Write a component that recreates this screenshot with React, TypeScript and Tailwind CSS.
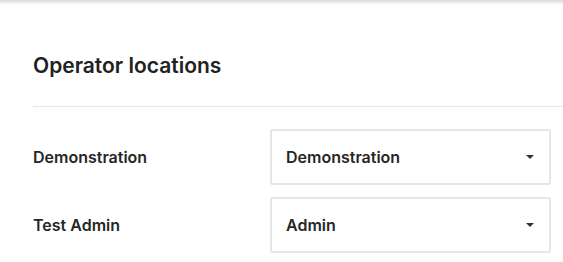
import React from "react";

function Caret() {
  return (
    <svg width="8" height="4" viewBox="0 0 8 4" className="shrink-0">
      <path d="M0 0 H8 L4 4 Z" fill="#333" />
    </svg>
  );
}

function Select({ value }: { value: string }) {
  return (
    <div className="h-[56px] border-2 border-[#e6e6e6] rounded-[2px] flex items-center justify-between pl-[14px] pr-[15px]">
      <span className="text-[16px] font-semibold text-[#262626]">{value}</span>
      <Caret />
    </div>
  );
}

export default function App() {
  const rows = [
    { label: "Demonstration", value: "Demonstration" },
    { label: "Test Admin", value: "Admin" },
  ];
  return (
    <div className="w-[563px] h-[262px] bg-white overflow-hidden" style={{ fontFamily: "Inter, 'Noto Sans', sans-serif" }}>
      <div className="h-[5px] bg-gradient-to-b from-[#d9dadd] to-white" />
      <div className="pl-[33px]">
        <div className="h-[101px] flex items-center pt-[19px]">
          <h1 className="text-[21px] font-semibold text-[#222222] leading-none">Operator locations</h1>
        </div>
        <div className="h-px bg-[#e6e6e6]" />
        <div className="pt-[22px] flex flex-col gap-[12px]">
          {rows.map((r) => (
            <div key={r.label} className="grid grid-cols-[237px_281px] items-center">
              <span className="text-[16px] font-semibold text-[#262626]">{r.label}</span>
              <Select value={r.value} />
            </div>
          ))}
        </div>
      </div>
    </div>
  );
}
